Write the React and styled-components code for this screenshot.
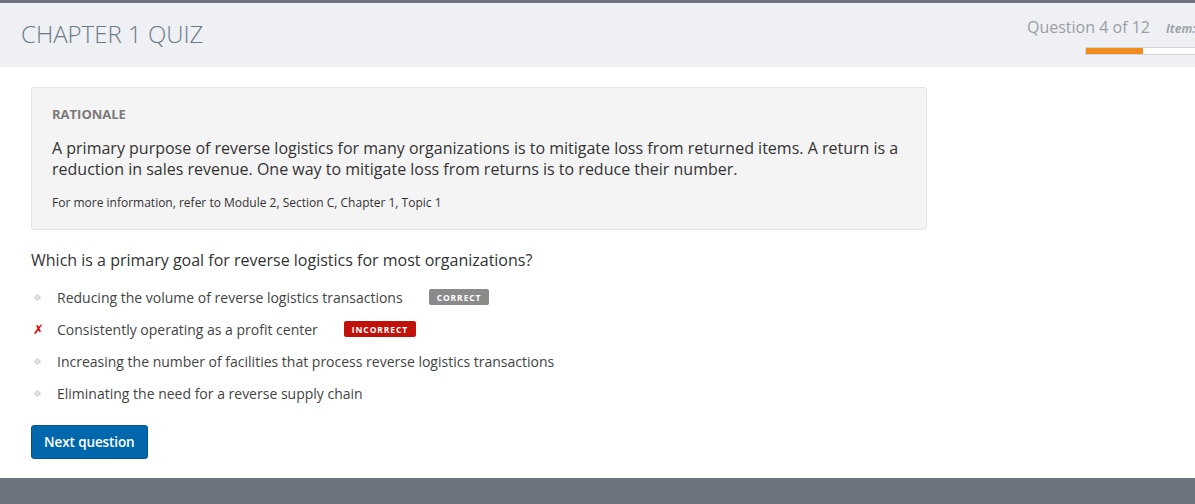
import React from "react";
import styled, { createGlobalStyle } from "styled-components";

const Global = createGlobalStyle`
  html, body { margin: 0; padding: 0; }
  body {
    font-family: "Open Sans", "Noto Sans", sans-serif;
    background: #ffffff;
    overflow: hidden;
    color: #333;
  }
`;

const Page = styled.div`
  width: 100%;
  min-height: 504px;
  display: flex;
  flex-direction: column;
  overflow: hidden;
`;

const TopStripe = styled.div`
  height: 3px;
  background: #6c757d;
`;

const Header = styled.header`
  height: 64px;
  background: #eef0f4;
  display: flex;
  justify-content: space-between;
  align-items: flex-start;
  padding-left: 21px;
  overflow: hidden;
`;

const Title = styled.h1`
  margin: 0;
  margin-top: 16px;
  font-weight: 300;
  font-size: 24px;
  line-height: 30px;
  color: #6c7a88;
`;

const Status = styled.div`
  display: flex;
  flex-direction: column;
  width: 168px;
  flex-shrink: 0;
  padding-top: 12px;
`;

const StatusRow = styled.div`
  display: flex;
  align-items: baseline;
  white-space: nowrap;
`;

const QuestionCount = styled.span`
  font-size: 16px;
  line-height: 24px;
  color: #9a9ea4;
`;

const ItemLabel = styled.span`
  margin-left: 16px;
  font-size: 12px;
  font-weight: 700;
  font-style: italic;
  color: #a0a4a9;
`;

const Progress = styled.div`
  margin-left: 58px;
  margin-top: 8px;
  height: 6px;
  width: 200px;
  background: #ffffff;
  border: 1px solid #d4d4d4;
  border-right: none;
  display: flex;
`;

const ProgressFill = styled.div`
  background: #f28c1f;
  height: 100%;
`;

const Main = styled.main`
  flex: 1;
  padding: 20px 31px 19px;
  display: flex;
  flex-direction: column;
  align-items: flex-start;
`;

const Rationale = styled.section`
  box-sizing: border-box;
  width: 896px;
  background: #f4f4f4;
  border: 1px solid #e4e4e4;
  border-radius: 3px;
  padding: 18px 20px 18px;
`;

const RationaleHeading = styled.h2`
  margin: 0;
  font-size: 13px;
  line-height: 16px;
  font-weight: 700;
  color: #7a7a7a;
`;

const RationaleText = styled.p`
  margin: 16px 0 0;
  font-size: 16px;
  line-height: 21px;
  color: #333;
`;

const Reference = styled.p`
  margin: 14px 0 0;
  font-size: 12px;
  line-height: 17px;
  color: #333;
`;

const Question = styled.h3`
  margin: 19px 0 0;
  font-size: 16px;
  line-height: 22px;
  font-weight: 400;
  color: #333;
`;

const Options = styled.ul`
  list-style: none;
  margin: 10px 0 0;
  padding: 0;
`;

const Option = styled.li`
  display: flex;
  align-items: center;
  height: 32px;
  font-size: 14px;
  color: #444;
`;

const Marker = styled.span`
  width: 26px;
  display: flex;
  align-items: center;
  padding-left: 2px;
  box-sizing: border-box;
`;

const Dot = styled.span`
  width: 3px;
  height: 3px;
  margin-left: 2px;
  border: 1px solid #d0d0d0;
  background: #e6e6e6;
  transform: rotate(45deg);
`;

const Cross = styled.span`
  color: #e00000;
  font-weight: 700;
  font-style: italic;
  font-size: 13px;
  font-family: "DejaVu Sans", sans-serif;
`;

const Badge = styled.span`
  margin-left: 26px;
  height: 16px;
  padding: 0 8px;
  display: inline-flex;
  align-items: center;
  border-radius: 2px;
  background: ${(p) => (p.$ok ? "#8a8a8a" : "#c1120a")};
  color: #fff;
  font-size: 8.5px;
  font-weight: 700;
  letter-spacing: 0.9px;
`;

const NextButton = styled.button`
  margin-top: 16px;
  height: 34px;
  padding: 0 12px;
  background: #0167ac;
  border: 1px solid #05558d;
  border-radius: 3px;
  color: #fff;
  font-family: inherit;
  font-size: 13.5px;
  font-weight: 600;
  letter-spacing: -0.1px;
  cursor: pointer;
`;

const Footer = styled.footer`
  height: 26px;
  background: #6c757d;
`;

const options = [
  { text: "Reducing the volume of reverse logistics transactions", badge: "CORRECT", ok: true },
  { text: "Consistently operating as a profit center", badge: "INCORRECT", ok: false, chosen: true },
  { text: "Increasing the number of facilities that process reverse logistics transactions" },
  { text: "Eliminating the need for a reverse supply chain" },
];

export default function App() {
  return (
    <Page>
      <Global />
      <TopStripe />
      <Header>
        <Title>CHAPTER 1 QUIZ</Title>
        <Status>
          <StatusRow>
            <QuestionCount>Question 4 of 12</QuestionCount>
            <ItemLabel>Item:</ItemLabel>
          </StatusRow>
          <Progress>
            <ProgressFill style={{ width: `${(57 / 200) * 100}%` }} />
          </Progress>
        </Status>
      </Header>
      <Main>
        <Rationale>
          <RationaleHeading>RATIONALE</RationaleHeading>
          <RationaleText>
            A primary purpose of reverse logistics for many organizations is to mitigate loss from returned items. A
            return is a reduction in sales revenue. One way to mitigate loss from returns is to reduce their number.
          </RationaleText>
          <Reference>For more information, refer to Module 2, Section C, Chapter 1, Topic 1</Reference>
        </Rationale>
        <Question>Which is a primary goal for reverse logistics for most organizations?</Question>
        <Options>
          {options.map((o) => (
            <Option key={o.text}>
              <Marker>{o.chosen && !o.ok ? <Cross>✗</Cross> : <Dot />}</Marker>
              <span>{o.text}</span>
              {o.badge && <Badge $ok={o.ok}>{o.badge}</Badge>}
            </Option>
          ))}
        </Options>
        <NextButton>Next question</NextButton>
      </Main>
      <Footer />
    </Page>
  );
}
